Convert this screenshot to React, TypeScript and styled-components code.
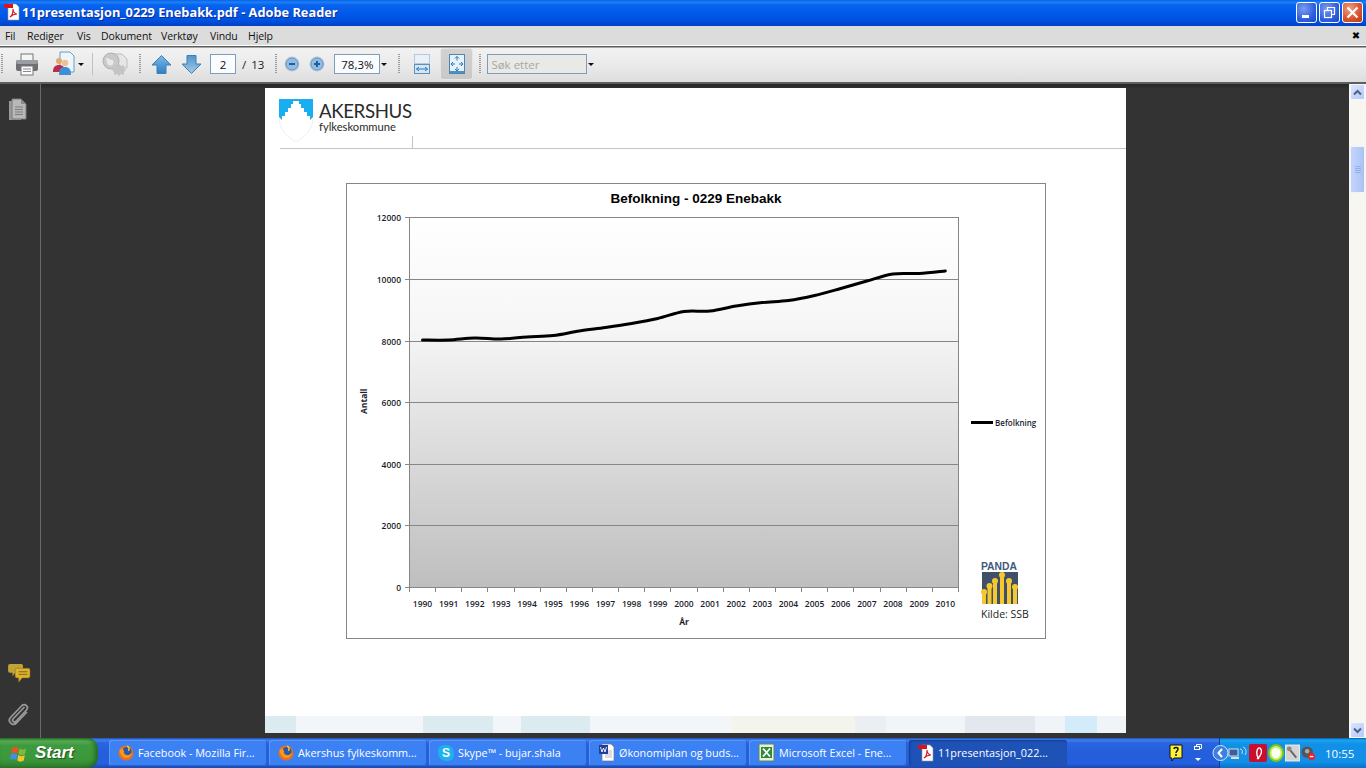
import React from "react";
import styled, { createGlobalStyle } from "styled-components";

const Global = createGlobalStyle`
  html, body { margin: 0; padding: 0; overflow: hidden; background: #333; }
  * { box-sizing: border-box; }
`;
const Win = styled.div`
  width: 1366px; height: 768px; display: flex; flex-direction: column; overflow: hidden;
  font-family: "Liberation Sans", Arial, sans-serif;
`;
const TitleBar = styled.div`
  height: 26px; display: flex; align-items: center; padding: 0 3px 2px 4px; color: #fff;
  background: linear-gradient(180deg, #0a5fe0 0, #1a82fb 2px, #0a63ee 5px, #0058e8 14px, #0050de 21px, #0040c4 26px);
`;
const TitleText = styled.div`
  font: bold 12.8px "Open Sans", "Liberation Sans", sans-serif; margin-left: 2px; flex: 1; white-space: nowrap;
  text-shadow: 1px 1px 0 #0f2f9a;
`;
const WinBtn = styled.div<{ $close?: boolean }>`
  width: 21px; height: 21px; margin-left: 2px; border: 1px solid #fff; border-radius: 3px; display: flex; align-items: center; justify-content: center;
  background: ${p => p.$close ? "radial-gradient(circle at 35% 30%, #f0a080, #d9502c 60%, #b83a18)" : "radial-gradient(circle at 35% 30%, #7d9df0, #2f5fe0 60%, #1c46c4)"};
`;
const MenuBar = styled.div`
  height: 19px; background: #dcdcdc; display: flex; align-items: center; padding: 0 6px 0 5px; font-size: 10.5px; color: #111;
  font-family: "Open Sans", "Liberation Sans", sans-serif; letter-spacing: -0.1px;
`;
const MenuItem = styled.span<{ $w: number }>` width: ${p => p.$w}px; white-space: nowrap; `;
const MenuClose = styled.span` margin-left: auto; font: 10px "DejaVu Sans", sans-serif; color: #000; `;
const Tool = styled.div`
  height: 39px; display: flex; align-items: center; border-top: 1px solid #fff; border-bottom: 2px solid #5e5e5e;
  background: linear-gradient(180deg, #5a5a5a 0, #5a5a5a 1px, #f2f2f2 2px, #e9e9e9 60%, #dddddd 100%);
`;
const Slot = styled.div<{ $x: number; $w: number }>`
  margin-left: ${p => p.$x}px; width: ${p => p.$w}px; height: 26px; display: flex; align-items: center; justify-content: center; flex: none;
`;
const Grip = styled.div<{ $x: number }>`
  margin-left: ${p => p.$x}px; width: 2px; height: 20px; flex: none;
  background: repeating-linear-gradient(180deg, #9a9a9a 0, #9a9a9a 1px, transparent 1px, transparent 2px);
`;
const Sep = styled.div<{ $x: number }>` margin-left: ${p => p.$x}px; width: 1px; height: 22px; background: #c0c0c0; flex: none; `;
const Input = styled.div<{ $x: number; $w: number; $muted?: boolean }>`
  margin-left: ${p => p.$x}px; width: ${p => p.$w}px; height: 20px; flex: none; border: 1px solid #7f9db9; background: ${p => p.$muted ? "#e9e9e6" : "#fafcff"};
  font: 11.5px "Open Sans", "Liberation Sans", sans-serif; color: ${p => p.$muted ? "#a8a89e" : "#111"};
  display: flex; align-items: center; justify-content: ${p => p.$muted ? "flex-start" : "center"}; padding-left: ${p => p.$muted ? "3px" : "0"};
`;
const Caret = styled.div<{ $x: number }>`
  margin-left: ${p => p.$x}px; width: 0; height: 0; flex: none; border: 3px solid transparent; border-top: 3px solid #111; border-bottom: 0;
`;
const ToolText = styled.span<{ $x: number }>` margin-left: ${p => p.$x}px; font: 11.5px "Open Sans", "Liberation Sans", sans-serif; color: #222; flex: none; `;
const ActiveBtn = styled(Slot)`
  height: 32px; background: linear-gradient(180deg, #d2d2d2, #c8c8c8); border: 1px solid #e6e6e6; border-radius: 3px;
`;
const Main = styled.div` height: 654px; display: flex; background: #333; overflow: hidden; `;
const Rail = styled.div`
  width: 41px; flex: none; border-right: 1px solid #6a6a6a; display: flex; flex-direction: column; align-items: center; padding: 14px 5px 12px 0;
`;
const RailSpace = styled.div` flex: 1; `;
const DocView = styled.div`
  flex: 1; padding: 4px 0 0 224px; overflow: hidden; background: linear-gradient(180deg, #262626 0, #333 5px);
`;
const Page = styled.div` width: 861px; height: 645px; background: #fff; display: flex; flex-direction: column; `;
const PageHead = styled.div`
  margin-left: 15px; height: 61px; border-bottom: 1px solid #c4c4c4; display: flex; align-items: flex-start; padding-top: 11px;
`;
const Brand = styled.div` margin-left: 6px; display: flex; flex-direction: column; color: #2b2b2b; width: 93px; `;
const BrandName = styled.div` font: 400 18.7px/20px "Lato", "Open Sans", sans-serif; margin-top: 2px; letter-spacing: -0.4px; white-space: nowrap; `;
const BrandSub = styled.div` font: 400 11.2px/12px "Lato", "Open Sans", sans-serif; white-space: nowrap; `;
const Tick = styled.div` align-self: flex-end; width: 1px; height: 12px; background: #c4c4c4; `;
const Card = styled.div` margin: 34px 0 0 81px; width: 700px; height: 456px; border: 1px solid #868686; flex: none; `;
const Band = styled.div` margin-top: auto; height: 17px; display: flex; `;
const Seg = styled.div<{ $w: number; $c: string }>` width: ${p => p.$w}px; background: ${p => p.$c}; flex: none; `;
const Scroll = styled.div`
  width: 17px; flex: none; background: #f7f6f1; display: flex; flex-direction: column; padding-top: 62px; position: relative;
`;
const ScrollBtn = styled.div<{ $top?: boolean }>`
  position: absolute; left: 1px; width: 15px; height: 16px; ${p => p.$top ? "top: 0;" : "bottom: 0;"}
  border: 1px solid #f4f7ff; border-radius: 2px; background: linear-gradient(135deg, #dbe5fd, #b5c8f7); display: flex; align-items: center; justify-content: center;
`;
const Thumb = styled.div`
  margin-left: 1px; width: 15px; height: 47px; border: 1px solid #eef3ff; border-radius: 2px; background: linear-gradient(90deg, #c4d4fb, #b7cbf8 60%, #aac0f4);
  display: flex; flex-direction: column; align-items: center; justify-content: center; gap: 1px;
`;
const ThumbLine = styled.div` width: 6px; height: 1px; background: #8fb0f0; `;
const Taskbar = styled.div`
  height: 30px; display: flex; align-items: stretch; color: #fff;
  background: linear-gradient(180deg, #1f4fb8 0, #3f83ef 2px, #2a63df 5px, #245edb 50%, #2560e0 85%, #1a48ad 100%);
`;
const StartBtn = styled.div`
  width: 98px; flex: none; display: flex; align-items: center; padding-left: 10px; gap: 6px; border-radius: 0 10px 10px 0;
  background: linear-gradient(180deg, #2f7c2f 0, #57ad57 10%, #3e9a3e 25%, #3b983b 70%, #2f7f2f 100%);
  box-shadow: inset -3px 0 4px rgba(20,70,20,.55);
`;
const StartText = styled.span` font: italic bold 17px "Liberation Sans", sans-serif; text-shadow: 1px 1px 1px #1c4f1c; `;
const Tasks = styled.div` margin-left: 11px; display: flex; gap: 2px; align-items: center; flex: none; `;
const TaskBtn = styled.div<{ $on?: boolean }>`
  width: 158px; height: 26px; border-radius: 3px; display: flex; align-items: center; gap: 4px; padding: 0 0 1px 9px; white-space: nowrap; overflow: hidden;
  font: 10.8px "Open Sans", "Liberation Sans", sans-serif;
  background: ${p => p.$on ? "#1e52b7" : "#3c81f3"};
  box-shadow: ${p => p.$on ? "inset 1px 1px 2px #153c8c" : "inset 1px 1px 0 #5c97f7, inset -1px -1px 0 #2a62cb"};
`;
const Tray = styled.div` margin-left: auto; display: flex; align-items: center; flex: none; width: 198px; `;
const TrayLeft = styled.div` width: 51px; padding-left: 1px; display: flex; align-items: center; gap: 10px; flex: none; `;
const Notify = styled.div`
  flex: 1; height: 100%; display: flex; align-items: center; padding-left: 9px; gap: 1px; align-self: stretch;
  background: linear-gradient(180deg, #0c59b9 0, #18a6ee 2px, #1290e8 6px, #1290e8 80%, #0f70c8 100%);
  border-left: 1px solid #0d3f9a;
`;
const Clock = styled.span` margin-left: 8px; font: 11.5px "Open Sans", "Liberation Sans", sans-serif; `;
const Skype = styled.div`
  width: 16px; height: 16px; border-radius: 6px 8px 6px 8px; background: #1bb2ee; flex: none; color: #fff; font: bold 12px/16px "Liberation Sans", sans-serif; text-align: center;
`;

const Panda = styled.text` font: bold 10.3px "Liberation Sans", sans-serif; fill: #3f5a7c; `;
const AxisText = styled.text<{ $bold?: boolean; $small?: boolean }>`
  font: ${p => p.$bold ? 700 : 600} ${p => p.$small ? 8 : 8.5}px "Open Sans", "Liberation Sans", sans-serif; fill: #1d1d2d;
`;
const ChartTitle = styled.text` font: bold 13.5px "Liberation Sans", sans-serif; fill: #000; `;
const Kilde = styled.text` font: 10.5px "Open Sans", "Liberation Sans", sans-serif; fill: #222; `;

const Pdf = () => (
  <svg width="16" height="18" viewBox="0 0 16 18" style={{ flex: "none" }}>
    <path d="M4 1h8l3 3v13H4z" fill="#fff" stroke="#999" strokeWidth=".6" />
    <rect x="0" y="1" width="9" height="4" fill="#d8151a" />
    <path d="M6 14c2-1 3-5 3-8 0 3 2 5 4 5-3 0-5 1-7 3z" fill="none" stroke="#d8151a" strokeWidth="1.1" />
  </svg>
);
const Fox = () => (
  <svg width="16" height="17" viewBox="0 0 16 17" style={{ flex: "none" }}>
    <circle cx="8" cy="9" r="7.5" fill="#e8701c" />
    <circle cx="9" cy="7.5" r="4.5" fill="#2a5aa8" />
    <path d="M1.5 7c1 5 5 8 9 6.5 2-1 3-3 3-5-1 2-3 3-5 2.5-2-.5-3-2-2.500-4L4 4C3 5 2 6 1.500 7z" fill="#f59a1e" />
    <path d="M9 2c2 1 2.500 3 1.500 5" stroke="#f3c030" strokeWidth="1.5" fill="none" />
  </svg>
);
const Word = () => (
  <svg width="17" height="19" viewBox="0 0 17 19" style={{ flex: "none" }}>
    <path d="M4 1h9l3 3v14H4z" fill="#fff" stroke="#777" strokeWidth=".7" />
    <path d="M7 8h7M7 10h7M7 12h7M7 14h7" stroke="#99a" strokeWidth=".7" />
    <rect x="1" y="2" width="9" height="9" fill="#1e3f9a" />
    <path d="M2.500 4l1.500 5 1.500-4 1.500 4 1.500-5" stroke="#fff" fill="none" strokeWidth=".9" />
  </svg>
);
const Excel = () => (
  <svg width="17" height="19" viewBox="0 0 17 19" style={{ flex: "none" }}>
    <rect x="1" y="1" width="15" height="17" fill="#e8f0e0" stroke="#5b8a5b" />
    <rect x="3" y="4" width="11" height="11" fill="#2f8a3a" />
    <path d="M5 5.500l7 8M12 5.500l-7 8" stroke="#fff" strokeWidth="1.8" />
  </svg>
);
const Arrow = ({ down }: { down?: boolean }) => (
  <svg width="21" height="21" viewBox="0 0 21 21">
    <defs>
      <linearGradient id={down ? "ad" : "au"} x1="0" y1="0" x2="0" y2="1">
        <stop offset="0" stopColor={down ? "#a6c9e4" : "#7fb9e6"} />
        <stop offset="1" stopColor={down ? "#4f96cf" : "#2f7fc4"} />
      </linearGradient>
    </defs>
    <path transform={down ? "rotate(180 10.500 10.500)" : undefined} d="M10.500 1.500L20 11h-5v8.500H6V11H1z" fill={`url(#${down ? "ad" : "au"})`} stroke="#3a80b8" strokeWidth="1" />
  </svg>
);
const Zoom = ({ plus }: { plus?: boolean }) => (
  <svg width="16" height="16" viewBox="0 0 16 16">
    <circle cx="8" cy="8" r="7.500" fill="#b8c8d8" />
    <circle cx="8" cy="8" r="6" fill="#8fbde6" stroke="#6f96b8" />
    <path d={plus ? "M5 8h6M8 5v6" : "M5 8h6"} stroke="#1f5f9f" strokeWidth="2" />
  </svg>
);

const years = Array.from({ length: 21 }, (_, i) => 1990 + i);
const ys = [340, 340, 338, 339, 337, 335.5, 331, 327.5, 323.5, 318.5, 311.5, 311, 306, 302.5, 300.5, 295.5, 288.5, 281, 274, 273.500, 271];
const xs = years.map((_, i) => 422.5 + i * 26.14);
const linePath = (() => {
  let d = `M${xs[0]} ${ys[0]}`;
  for (let i = 0; i < xs.length - 1; i++) {
    const p0 = i > 0 ? i - 1 : i;
    const p3 = i + 2 < xs.length ? i + 2 : i + 1;
    const c1x = xs[i] + (xs[i + 1] - xs[p0]) / 6;
    const c1y = ys[i] + (ys[i + 1] - ys[p0]) / 6;
    const c2x = xs[i + 1] - (xs[p3] - xs[i]) / 6;
    const c2y = ys[i + 1] - (ys[p3] - ys[i]) / 6;
    d += ` C${c1x} ${c1y} ${c2x} ${c2y} ${xs[i + 1]} ${ys[i + 1]}`;
  }
  return d;
})();
const grid: [number, string][] = [[217.5, "12000"], [279.5, "10000"], [341.5, "8000"], [402.5, "6000"], [464.5, "4000"], [525.5, "2000"], [587.5, "0"]];
const pandaBars: [number, number][] = [[984, 592], [989.5, 586], [995, 581], [1002, 575], [1009, 581], [1015, 587]];

const Chart = () => (
  <svg width="698" height="454" viewBox="347 184 698 454" style={{ display: "block" }}>
    <defs>
      <linearGradient id="plot" x1="0" y1="0" x2="0" y2="1">
        <stop offset="0" stopColor="#ffffff" />
        <stop offset=".3" stopColor="#f6f6f6" />
        <stop offset=".5" stopColor="#e6e6e6" />
        <stop offset="1" stopColor="#bebebe" />
      </linearGradient>
    </defs>
    <ChartTitle x="696" y="203" textAnchor="middle">Befolkning - 0229 Enebakk</ChartTitle>
    <rect x="409.5" y="217.5" width="549" height="370" fill="url(#plot)" stroke="#868686" />
    {grid.map(([y, l]) => (
      <g key={l}>
        <path d={`M405 ${y}H958`} stroke="#868686" />
        <AxisText x="401" y={y + 3} textAnchor="end">{l}</AxisText>
      </g>
    ))}
    {Array.from({ length: 22 }, (_, i) => (
      <path key={i} d={`M${Math.round(409 + i * 26.14) + 0.5} 587V592`} stroke="#868686" />
    ))}
    {years.map((y, i) => (
      <AxisText key={y} x={xs[i]} y="607" textAnchor="middle">{y}</AxisText>
    ))}
    <path d={linePath} fill="none" stroke="#000" strokeWidth="3" strokeLinecap="round" />
    <AxisText $bold x="684" y="625" textAnchor="middle">År</AxisText>
    <AxisText $bold transform="translate(367 414) rotate(-90)" x="0" y="0">Antall</AxisText>
    <path d="M971 422.500H993" stroke="#000" strokeWidth="3" />
    <AxisText $small x="995" y="426">Befolkning</AxisText>
    <Panda x="981" y="570">PANDA</Panda>
    <rect x="982" y="572" width="36" height="32" fill="#3f5068" />
    {pandaBars.map(([x, y]) => (
      <g key={x}>
        <rect x={x - 2} y={y} width="4" height={604 - y} fill="#f4c82e" />
        <circle cx={x} cy={y} r="3" fill="#f4c82e" />
      </g>
    ))}
    <Kilde x="981" y="618">Kilde: SSB</Kilde>
  </svg>
);

const segs: [number, string][] = [
  [31, "#dcebef"], [127, "#f2f6f8"], [70, "#dcebef"], [28, "#f2f6f8"], [69, "#dcebef"], [142, "#f2f6f8"],
  [123, "#f3f4ec"], [31, "#ebeff3"], [79, "#f1f5f8"], [70, "#e3e8ef"], [30, "#f0f4f8"], [32, "#d2ecfa"], [29, "#f0f4f8"],
];
const menus: [string, number][] = [["Fil", 22], ["Rediger", 50], ["Vis", 24], ["Dokument", 60], ["Verktøy", 49], ["Vindu", 38], ["Hjelp", 30]];

export default function App() {
  return (
    <Win>
      <Global />
      <TitleBar>
        <Pdf />
        <TitleText>11presentasjon_0229 Enebakk.pdf - Adobe Reader</TitleText>
        <WinBtn><svg width="11" height="13" viewBox="0 0 11 13"><rect x="1" y="9" width="7" height="3" fill="#fff" /></svg></WinBtn>
        <WinBtn><svg width="15" height="15" viewBox="0 0 15 15" fill="none" stroke="#fff"><rect x="2.500" y="5.500" width="7" height="7" strokeWidth="1.200" /><path d="M5.500 5V2.500H12.500V9.500H10" strokeWidth="1.200" /></svg></WinBtn>
        <WinBtn $close><svg width="13" height="13" viewBox="0 0 13 13"><path d="M1.500 1.500l10 10M11.500 1.500l-10 10" stroke="#fff" strokeWidth="2.200" /></svg></WinBtn>
      </TitleBar>
      <MenuBar>
        {menus.map(([m, w]) => <MenuItem key={m} $w={w}>{m}</MenuItem>)}
        <MenuClose>✖</MenuClose>
      </MenuBar>
      <Tool>
        <Grip $x={1} />
        <Slot $x={12} $w={24}>
          <svg width="24" height="24" viewBox="0 0 24 24">
            <rect x="6" y="2" width="12" height="8" fill="#f4f4f4" stroke="#777" />
            <rect x="1" y="8" width="22" height="11" rx="2" fill="#6c6f74" />
            <rect x="1" y="8" width="22" height="4" rx="2" fill="#9a9da2" />
            <rect x="6" y="14" width="12" height="9" fill="#fbfbfb" stroke="#777" />
            <path d="M8 17h8M8 19.500h8" stroke="#888" />
          </svg>
        </Slot>
        <Slot $x={11} $w={26}>
          <svg width="26" height="26" viewBox="0 0 26 26">
            <path d="M10 1h10l4 4v16H10z" fill="#eef5fb" stroke="#6b9cc8" />
            <circle cx="9" cy="10" r="3" fill="#e8a868" />
            <path d="M3 21c0-5 2-7 6-7s6 2 6 7z" fill="#b82d4a" />
            <circle cx="15" cy="12" r="3.200" fill="#f0c090" />
            <path d="M9 24c0-6 2-8 6-8s6 2 6 8z" fill="#3f8fd8" />
          </svg>
        </Slot>
        <Caret $x={2} />
        <Sep $x={8} />
        <Slot $x={9} $w={26}>
          <svg width="26" height="24" viewBox="0 0 26 24">
            <path d="M8 2h12l5 5v9H8z" fill="#e6e6e6" stroke="#bcbcbc" />
            <circle cx="9" cy="9" r="8" fill="#c9c9c9" stroke="#b0b0b0" />
            <path d="M4 6c3 0 4 2 6 2s2 4 0 5-4 0-5-2z" fill="#e8e8e8" />
            <path d="M17 12l2 2 3-1 0 3 2 2-2 2 0 3-3-1-2 2-2-2-3 1 0-3-2-2 2-2 0-3 3 1z" fill="#c4c4c4" />
          </svg>
        </Slot>
        <Grip $x={11} />
        <Slot $x={10} $w={21}><Arrow /></Slot>
        <Slot $x={9} $w={21}><Arrow down /></Slot>
        <Input $x={8} $w={26}>2</Input>
        <ToolText $x={6}>/</ToolText>
        <ToolText $x={5}>13</ToolText>
        <Grip $x={11} />
        <Slot $x={7} $w={16}><Zoom /></Slot>
        <Slot $x={9} $w={16}><Zoom plus /></Slot>
        <Input $x={9} $w={46}>78,3%</Input>
        <Caret $x={1} />
        <Grip $x={11} />
        <Slot $x={14} $w={16}>
          <svg width="16" height="20" viewBox="0 0 16 20">
            <rect x=".5" y=".5" width="15" height="9" fill="#e8f0f8" stroke="#b8c8d8" />
            <rect x=".5" y="10.500" width="15" height="9" fill="#d2e6f6" stroke="#5f8fb8" />
            <path d="M2.500 15h11M2.500 15l2.500-2M2.500 15l2.500 2M13.500 15l-2.500-2M13.500 15l-2.500 2" stroke="#2a78b8" fill="none" />
          </svg>
        </Slot>
        <ActiveBtn $x={10} $w={33}>
          <svg width="16" height="20" viewBox="0 0 16 20">
            <rect x=".5" y=".5" width="15" height="19" fill="#e6f2fb" stroke="#4f86b0" />
            <rect x="1" y="17" width="14" height="2" fill="#4f8fc0" />
            <path d="M8 2.500v4M6 4.500l2-2 2 2M8 17v-4M6 15l2 2 2-2M2 10h4M4 8l-2 2 2 2M14 10h-4M12 8l2 2-2 2" stroke="#2a78b8" fill="none" />
          </svg>
        </ActiveBtn>
        <Grip $x={6} />
        <Input $x={6} $w={100} $muted>Søk etter</Input>
        <Caret $x={1} />
      </Tool>
      <Main>
        <Rail>
          <svg width="20" height="24" viewBox="0 0 20 24">
            <path d="M1 3h12v19H1z" fill="#9a9a9a" />
            <path d="M4 1h9l5 5v15H4z" fill="#b8b8b8" stroke="#7a7a7a" />
            <path d="M13 1v5h5z" fill="#8a8a8a" />
            <path d="M7 9h8M7 11.500h8M7 14h8M7 16.500h8" stroke="#7d7d7d" />
          </svg>
          <RailSpace />
          <svg width="23" height="21" viewBox="0 0 26 24" style={{ marginBottom: 18, marginLeft: 4 }}>
            <path d="M2 1h13a2 2 0 0 1 2 2v6a2 2 0 0 1-2 2H8l-3 4v-4H2a2 2 0 0 1-2-2V3a2 2 0 0 1 2-2z" fill="#c0a438" />
            <path d="M10 6h13a2 2 0 0 1 2 2v7a2 2 0 0 1-2 2h-7l-4 5v-5h-2a2 2 0 0 1-2-2V8a2 2 0 0 1 2-2z" fill="#dcb232" stroke="#8a6a10" strokeWidth=".6" />
            <path d="M12 10h10M12 13h10" stroke="#7a5c10" />
          </svg>
          <svg width="22" height="24" viewBox="0 0 22 24" fill="none" stroke="#9a9a9a" strokeWidth="1.700">
            <path d="M17.500 5L6 17c-1.500 1.700 1 4 2.700 2.500L19.500 8c2.700-3-1.500-7-4.500-4.500L3.500 15.500c-3.500 4 2 9 6 5.500L20 10" />
          </svg>
        </Rail>
        <DocView>
          <Page>
            <PageHead>
              <svg width="34" height="43" viewBox="0 0 34 43" style={{ flex: "none", marginLeft: -1 }}>
                <path d="M0 0h34v19c0 11-8 19-17 24C8 38 0 30 0 19z" fill="#fff" stroke="#dde3e6" strokeWidth=".6" />
                <path d="M0 0h34v18l-3 3v-4h-3v-4h-3V9h-3V5h-2V2h-6v3h-2v4H9v4H6v4H3v4l-3-3z" fill="#18aef0" />
              </svg>
              <Brand>
                <BrandName>AKERSHUS</BrandName>
                <BrandSub>fylkeskommune</BrandSub>
              </Brand>
              <Tick />
            </PageHead>
            <Card><Chart /></Card>
            <Band>
              {segs.map(([w, c], i) => <Seg key={i} $w={w} $c={c} />)}
            </Band>
          </Page>
        </DocView>
        <Scroll>
          <ScrollBtn $top><svg width="9" height="7" viewBox="0 0 9 7"><path d="M1 5.500l3.500-3.500 3.500 3.500" fill="none" stroke="#4d6185" strokeWidth="2" /></svg></ScrollBtn>
          <Thumb><ThumbLine /><ThumbLine /><ThumbLine /><ThumbLine /></Thumb>
          <ScrollBtn><svg width="9" height="7" viewBox="0 0 9 7"><path d="M1 1.500l3.500 3.500 3.500-3.500" fill="none" stroke="#4d6185" strokeWidth="2" /></svg></ScrollBtn>
        </Scroll>
      </Main>
      <Taskbar>
        <StartBtn>
          <svg width="19" height="19" viewBox="0 0 19 19">
            <path d="M2 4c2-1.500 4-1.500 6.500 0l-1 5.500C5 8 3.500 8 1 9.500z" fill="#e8532a" />
            <path d="M9.500 4.500c2 1.500 4 1.500 6.500 0L15 10c-2.500 1.500-4.500 1.500-6.500 0z" fill="#7fba3a" />
            <path d="M1 10.500c2-1.500 4-1.500 6.300 0L6.300 16C4 14.500 2 14.500 0 16z" fill="#3f8fe8" />
            <path d="M8.300 11c2 1.500 4 1.500 6.500 0l-1 5.500c-2.500 1.500-4.500 1.500-6.500 0z" fill="#f4c52e" />
          </svg>
          <StartText>Start</StartText>
        </StartBtn>
        <Tasks>
          <TaskBtn><Fox />Facebook - Mozilla Fir...</TaskBtn>
          <TaskBtn><Fox />Akershus fylkeskomm...</TaskBtn>
          <TaskBtn><Skype>S</Skype>Skype™ - bujar.shala</TaskBtn>
          <TaskBtn><Word />Økonomiplan og buds...</TaskBtn>
          <TaskBtn><Excel />Microsoft Excel - Ene...</TaskBtn>
          <TaskBtn $on><Pdf />11presentasjon_022...</TaskBtn>
        </Tasks>
        <Tray>
          <TrayLeft>
            <svg width="14" height="18" viewBox="0 0 14 18"><path d="M1 1h12v13H5l-2 3v-3H1z" fill="#fff23a" stroke="#111" /><path d="M5 5c0-2 4-2 4 0 0 2-2 2-2 4M7 10v2" stroke="#111" strokeWidth="1.500" fill="none" /></svg>
            <svg width="10" height="20" viewBox="0 0 10 20" fill="none" stroke="#fff"><rect x="1.500" y="3.500" width="5" height="3" /><path d="M3.500 3V1.500h5v4H7" /><path d="M2 15h6l-3 3z" fill="#fff" stroke="none" /></svg>
          </TrayLeft>
          <Notify>
            <svg width="17" height="22" viewBox="0 0 17 22" style={{ marginLeft: -17, flex: "none" }}><circle cx="8.500" cy="11" r="7.500" fill="#3f7fe0" stroke="#cfe4ff" /><path d="M10 7l-3.500 4 3.500 4" fill="none" stroke="#fff" strokeWidth="2" /></svg>
            <svg width="20" height="18" viewBox="0 0 20 18" style={{ flex: "none", marginLeft: -2 }}><rect x="1" y="5" width="9" height="7" fill="#3a5f9a" stroke="#ddd" /><rect x="3" y="13" width="8" height="2" fill="#ddd" /><path d="M12 5c2 0 3 2 2 5M15 3c3 1 4 5 2 8" stroke="#ddd" fill="none" /></svg>
            <svg width="18" height="18" viewBox="0 0 18 18" style={{ flex: "none" }}><rect width="18" height="18" rx="2" fill="#c8102e" /><path d="M8 15c4-3 6-8 3-11-2-1-4 3-3 7 .5 2 1 3 2 4" fill="none" stroke="#fff" strokeWidth="1.300" /></svg>
            <svg width="16" height="18" viewBox="0 0 18 19" style={{ flex: "none" }}><ellipse cx="9" cy="9.500" rx="8" ry="9" fill="#c9f26a" stroke="#7cc41e" strokeWidth="2" /><ellipse cx="9" cy="9.500" rx="5" ry="6" fill="#fbfff0" /></svg>
            <svg width="15" height="18" viewBox="0 0 16 18" style={{ flex: "none" }}><rect x=".5" y=".5" width="15" height="17" fill="#d4d4d4" stroke="#eee" /><path d="M4 4l8 10" stroke="#666" strokeWidth="2" /><circle cx="4.500" cy="4.500" r="2.500" fill="#888" /></svg>
            <svg width="15" height="18" viewBox="0 0 17 18" style={{ flex: "none" }}><circle cx="7" cy="8" r="6.500" fill="#555" /><circle cx="7" cy="7" r="2.500" fill="#aaa" /><circle cx="12" cy="13" r="4" fill="#e8232a" /><path d="M10 13h4" stroke="#fff" strokeWidth="1.500" /></svg>
            <Clock>10:55</Clock>
          </Notify>
        </Tray>
      </Taskbar>
    </Win>
  );
}
